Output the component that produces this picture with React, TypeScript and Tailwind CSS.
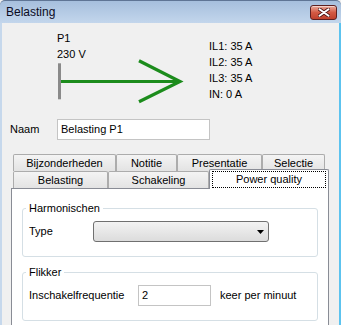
import React from 'react';

function CloseButton() {
  return (
    <div className="flex h-[15px] w-[27px] items-center justify-center rounded-[3px] border border-[#5e2020] bg-gradient-to-b from-[#e9a99b] via-[#d35a44] to-[#c0412d] shadow-[inset_0_1px_0_rgba(255,255,255,0.5)]">
      <svg width="12" height="9" viewBox="0 0 12 9">
        <path d="M1.5 1.2 L10.5 7.8 M10.5 1.2 L1.5 7.8" stroke="#4a1212" strokeWidth="3.6" strokeLinecap="round" />
        <path d="M1.5 1.2 L10.5 7.8 M10.5 1.2 L1.5 7.8" stroke="#ffffff" strokeWidth="2" strokeLinecap="round" />
      </svg>
    </div>
  );
}

function BackTab({ label, width }: { label: string; width: string }) {
  return (
    <div
      className={`${width} flex h-[17px] items-center justify-center rounded-t-[2px] border border-b-0 border-[#acacac] bg-gradient-to-b from-[#f4f4f4] to-[#e3e3e3] leading-none`}
    >
      {label}
    </div>
  );
}

function GroupBox({ title, children }: { title: string; children: React.ReactNode }) {
  return (
    <div className="ml-[10px] h-[49px] w-[296px] rounded-[3px] border border-[#d5dfe5]">
      <div className="-mt-[8px] ml-[3px] w-fit bg-white px-[3px] leading-[15px]">{title}</div>
      <div className="mt-[5px] flex items-center pl-[6px]">{children}</div>
    </div>
  );
}

export default function App() {
  return (
    <div className="flex h-[325px] w-[341px] flex-col overflow-hidden bg-[#f0f0f0] font-['Liberation_Sans',Arial,sans-serif] text-[11px] text-black">
      <header className="flex h-[23px] shrink-0 items-center justify-between rounded-t-[5px] border-t border-[#5f7595] bg-gradient-to-b from-[#a6bfdd] to-[#c3d6ec] pl-[6px] pr-[4px]">
        <span className="text-[12px] text-[#0b0b1e]">Belasting</span>
        <CloseButton />
      </header>

      <div className="flex min-h-0 flex-1 border-l-[2px] border-r-[2px] border-l-[#c6d8ec] border-r-[#5cc3ef]">
        <div className="flex min-w-0 flex-1 flex-col">
          {/* diagram */}
          <div className="flex h-[92px] shrink-0">
            <div className="ml-[55px] w-[152px] pt-[7px] leading-[16px]">
              <div>P1</div>
              <div>230 V</div>
              <svg width="130" height="40" viewBox="0 0 130 40" className="overflow-visible">
                <line x1="2.5" y1="1.3" x2="2.5" y2="37.3" stroke="#8a8a8a" strokeWidth="3" />
                <line x1="4" y1="19.5" x2="122" y2="19.5" stroke="#1c8c1c" strokeWidth="3.2" />
                <polyline points="82,-1.3 123,19.5 82,39.7" fill="none" stroke="#1c8c1c" strokeWidth="3.2" />
              </svg>
            </div>
            <div className="pt-[15px] leading-[16px]">
              <div>IL1: 35 A</div>
              <div>IL2: 35 A</div>
              <div>IL3: 35 A</div>
              <div>IN: 0 A</div>
            </div>
          </div>

          {/* name */}
          <div className="mt-[4px] flex shrink-0 items-center pl-[8px]">
            <span className="w-[47px]">Naam</span>
            <div className="flex h-[21px] w-[153px] items-center border border-[#c4c4c4] bg-white pl-[3px]">
              Belasting P1
            </div>
          </div>

          {/* tabs */}
          <div className="ml-[9px] mt-[14px] flex min-h-0 flex-1 flex-col">
            <div className="flex pl-[2px]">
              <BackTab label="Bijzonderheden" width="w-[103px]" />
              <BackTab label="Notitie" width="w-[61px]" />
              <BackTab label="Presentatie" width="w-[85px]" />
              <BackTab label="Selectie" width="w-[63px]" />
            </div>
            <div className="flex items-end pl-[2px]">
              <BackTab label="Belasting" width="w-[95px]" />
              <BackTab label="Schakeling" width="w-[101px]" />
              <div className="relative z-10 -mb-px -mt-[2px] h-[20px] w-[120px] rounded-t-[2px] border border-b-0 border-[#898c95] bg-white px-[2px] pt-[1px]">
                <div className="flex h-[17px] items-center justify-center border border-dotted border-black leading-none">
                  Power quality
                </div>
              </div>
            </div>
            <div className="w-[318px] flex-1 border border-b-0 border-[#898c95] bg-white pt-[19px]">
              <GroupBox title="Harmonischen">
                <span className="w-[64px]">Type</span>
                <div className="flex h-[21px] w-[176px] items-center justify-end rounded-[3px] border border-[#707070] bg-gradient-to-b from-[#f3f3f3] to-[#dcdcdc] pr-[4px]">
                  <svg width="7" height="4" viewBox="0 0 7 4">
                    <path d="M0 0 H7 L3.5 4 Z" fill="#000" />
                  </svg>
                </div>
              </GroupBox>
              <div className="h-[15px]" />
              <GroupBox title="Flikker">
                <span className="w-[109px]">Inschakelfrequentie</span>
                <div className="flex h-[21px] w-[73px] items-center border border-[#c4c4c4] bg-white pl-[3px]">2</div>
                <span className="ml-[9px]">keer per minuut</span>
              </GroupBox>
            </div>
          </div>
        </div>
      </div>
    </div>
  );
}
